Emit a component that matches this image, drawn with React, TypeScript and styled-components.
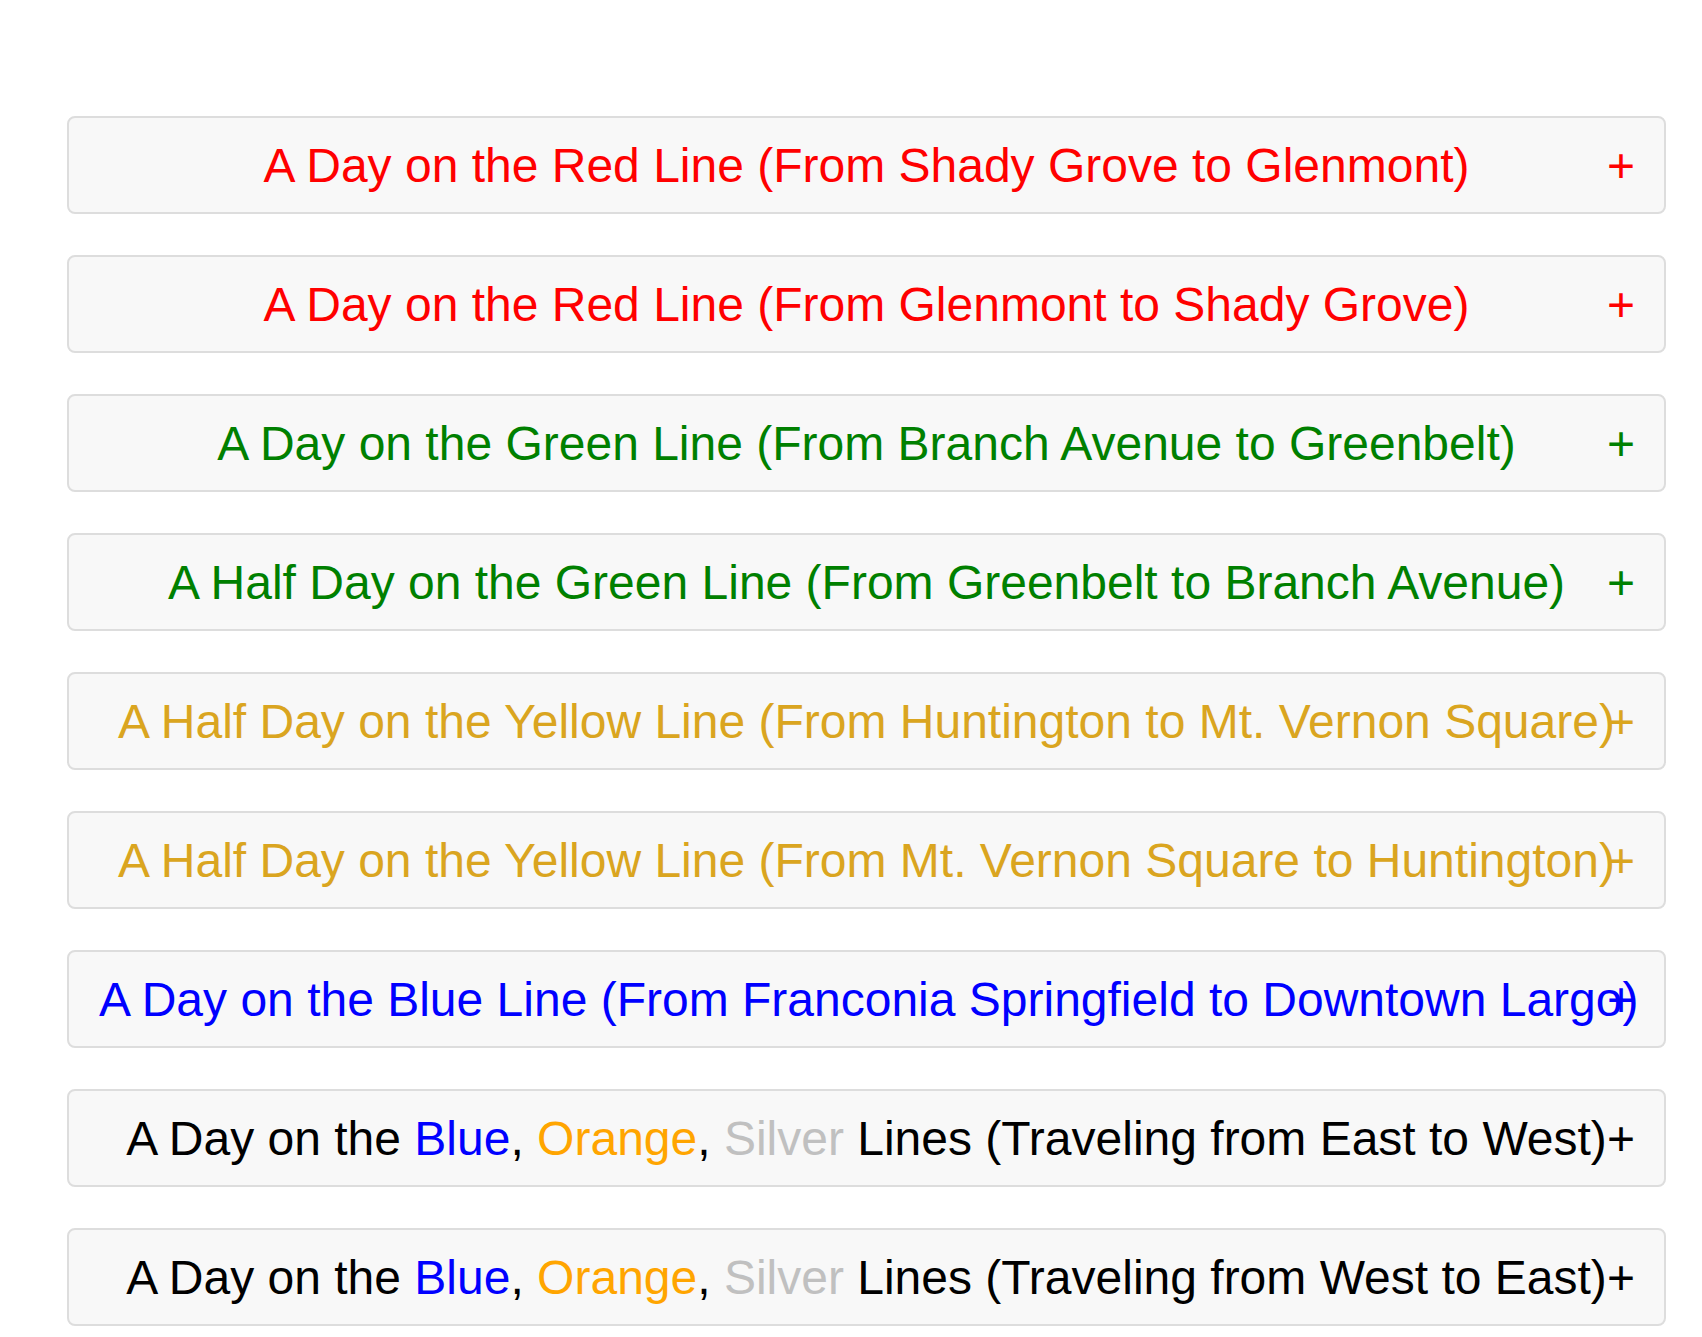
import React from "react";
import styled, { createGlobalStyle } from "styled-components";

const GlobalStyle = createGlobalStyle`
  body {
    margin: 0;
    background: #ffffff;
    font-family: "Liberation Sans", Arial, sans-serif;
  }
`;

const Page = styled.div`
  padding: 116px 36px 40px 67px;
  display: flex;
  flex-direction: column;
  gap: 41px;
`;

const Toggle = styled.button<{ $color: string }>`
  position: relative;
  display: block;
  width: 100%;
  box-sizing: border-box;
  height: 98px;
  padding: 0 30px;
  border: 2px solid #dddddd;
  border-radius: 8px;
  background: #f8f8f8;
  color: ${(p) => p.$color};
  font-family: "Liberation Sans", Arial, sans-serif;
  font-size: 48px;
  text-align: center;
  white-space: nowrap;
  cursor: pointer;
`;

const Plus = styled.span`
  position: absolute;
  right: 29px;
  top: 50%;
  transform: translateY(-50%);
`;

const Tint = styled.span<{ $color: string }>`
  color: ${(p) => p.$color};
`;

type Tour = { title: React.ReactNode; color: string };

const mixed = (dir: string) => (
  <>
    A Day on the <Tint $color="#0000ff">Blue</Tint>,{" "}
    <Tint $color="#ffa500">Orange</Tint>, <Tint $color="#c0c0c0">Silver</Tint> Lines
    (Traveling from {dir})
  </>
);

const tours: Tour[] = [
  { title: "A Day on the Red Line (From Shady Grove to Glenmont)", color: "#ff0000" },
  { title: "A Day on the Red Line (From Glenmont to Shady Grove)", color: "#ff0000" },
  { title: "A Day on the Green Line (From Branch Avenue to Greenbelt)", color: "#008000" },
  { title: "A Half Day on the Green Line (From Greenbelt to Branch Avenue)", color: "#008000" },
  { title: "A Half Day on the Yellow Line (From Huntington to Mt. Vernon Square)", color: "#daa520" },
  { title: "A Half Day on the Yellow Line (From Mt. Vernon Square to Huntington)", color: "#daa520" },
  { title: "A Day on the Blue Line (From Franconia Springfield to Downtown Largo)", color: "#0000ff" },
  { title: mixed("East to West"), color: "#000000" },
  { title: mixed("West to East"), color: "#000000" },
];

export default function App() {
  return (
    <>
      <GlobalStyle />
      <Page>
        {tours.map((t, i) => (
          <Toggle key={i} $color={t.color}>
            {t.title}
            <Plus>+</Plus>
          </Toggle>
        ))}
      </Page>
    </>
  );
}
